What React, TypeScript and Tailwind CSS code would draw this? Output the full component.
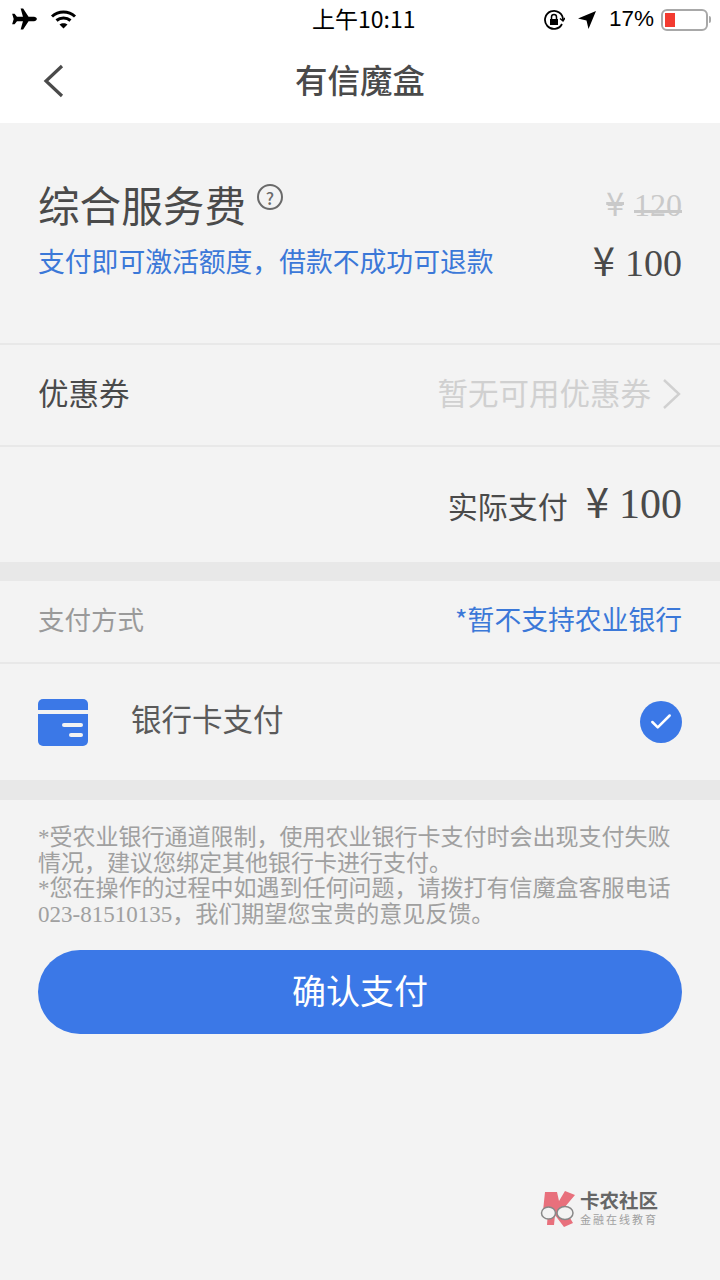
import { Check } from 'lucide-react';

const cjk = "font-['Noto_Sans_CJK_SC','Noto_Sans',sans-serif]";
const serif = "font-['Liberation_Serif','Noto_Sans_CJK_SC',serif]";

function StatusBar() {
  return (
    <div className="relative flex h-10 items-center justify-between pl-[11px] pr-[9px] text-black">
      <div className="-mt-[2px] flex items-center gap-[12px]">
        <svg width="27" height="24" viewBox="0 0 28 24" fill="currentColor">
          <path d="M10 1h2.600l5.600 8.700h5.600c1.600 0 3 1 3 2.300s-1.400 2.300-3 2.300h-5.600L12.600 23H10l2.400-8.700H6.200L3.700 17.500H1.200L2.800 12 1.200 6.500h2.500l2.500 3.200h6.200z" />
        </svg>
        <svg width="27" height="20" viewBox="0 0 27 20" fill="none" stroke="currentColor" strokeWidth="3">
          <path d="M2 7.500c6.500-6 16.500-6 23 0" />
          <path d="M6.500 11.500c4-3.500 10-3.500 14 0" />
          <path d="M13.500 19.500l-4-4c2.300-1.800 5.700-1.800 8 0z" fill="currentColor" stroke="none" />
        </svg>
      </div>
      <div className={`absolute left-[312px] top-[1px] text-[23px] leading-[34px] ${cjk}`}>上午10:11</div>
      <div className="-mt-[1px] flex items-center">
        <svg width="22" height="22" viewBox="0 0 22 22" fill="none" stroke="currentColor" strokeWidth="1.800" className="mr-[12px]">
          <path d="M19 15a9 9 0 1 1 1-4" />
          <path d="M17 9.500l3 2.500 2-3" strokeWidth="1.500" />
          <rect x="7" y="10" width="8" height="6" fill="currentColor" stroke="none" />
          <path d="M8.500 10V8a2.500 2.500 0 0 1 5 0v2" strokeWidth="1.500" />
        </svg>
        <svg width="20" height="20" viewBox="0 0 20 20" fill="currentColor" className="mr-[12px]">
          <path d="M19 1L11.500 19 9.500 10.500 1 8.500z" />
        </svg>
        <span className="mr-[7px] font-['Liberation_Sans',sans-serif] text-[22.500px] font-light leading-none">17%</span>
        <div className="flex h-[22px] w-[47px] items-center rounded-[6px] border-2 border-[#a8a8a8] p-[2px]">
          <div className="h-full w-[10px] bg-[#f33a30]" />
        </div>
        <div className="ml-[1px] h-[7px] w-[2px] rounded-r bg-[#a8a8a8]" />
      </div>
    </div>
  );
}

function NavBar() {
  return (
    <div className="relative flex h-[83px] items-center justify-center bg-white">
      <svg width="24" height="34" viewBox="0 0 24 34" fill="none" stroke="#4a4a4a" strokeWidth="3.200" className="absolute left-[42px] top-[24px]">
        <path d="M20 2L4 17l16 15" />
      </svg>
      <h1 className={`-mt-[4px] text-[32.500px] font-medium leading-none text-[#4a4a4a] ${cjk}`}>有信魔盒</h1>
    </div>
  );
}

function Price({ amount, yenSize }: { amount: string; yenSize: string }) {
  return (
    <>
      <span className={`${yenSize} ${cjk}`}>¥</span>
      <span className={`pl-[10px] ${serif}`}>{amount}</span>
    </>
  );
}

function CardIcon() {
  return (
    <svg width="50" height="47" viewBox="0 0 50 47" className="shrink-0">
      <rect width="50" height="47" rx="5" fill="#3b78e7" />
      <rect y="11" width="50" height="4" fill="#f3f3f3" />
      <rect x="24" y="24" width="21" height="4" rx="2" fill="#f3f3f3" />
      <rect x="31" y="34" width="14" height="4" rx="2" fill="#f3f3f3" />
    </svg>
  );
}

function Logo() {
  return (
    <div className="mr-[62px] flex items-center justify-end">
      <svg width="37" height="38" viewBox="0 0 37 38" className="mr-[3px]">
        <path d="M5 2h12l2 9 6-10 10 4-11 13 9 15-9 4-9-12-1 10H7l1-14H3z" fill="#e8707c" />
        <ellipse cx="8.500" cy="23" rx="7" ry="6" fill="#f3f3f3" stroke="#888888" strokeWidth="1.500" />
        <ellipse cx="25" cy="23" rx="8" ry="6.500" fill="#f3f3f3" stroke="#888888" strokeWidth="1.500" />
      </svg>
      <div className="flex flex-col font-['Liberation_Sans','Noto_Sans_CJK_SC',sans-serif]">
        <span className="text-[19.500px] font-bold leading-[22px] text-[#666666]">卡农社区</span>
        <span className="mt-[2px] text-[11px] leading-[13px] tracking-[2px] text-[#a0a0a0]">金融在线教育</span>
      </div>
    </div>
  );
}

export default function App() {
  return (
    <div lang="zh-CN" className={`flex min-h-[1280px] w-[720px] flex-col bg-[#f3f3f3] ${cjk}`}>
      <div className="bg-white">
        <StatusBar />
        <NavBar />
      </div>

      {/* Fee */}
      <section className="flex h-[222px] items-start justify-between border-b-2 border-[#e8e8e8] px-[38px] pt-[50px]">
        <div>
          <div className="flex items-start">
            <span className="text-[41.600px] leading-[62px] text-[#4a4a4a]">综合服务费</span>
            <span className="ml-[11px] mt-[11px] flex h-[26px] w-[26px] items-center justify-center rounded-full border-2 border-[#6a6a6a] text-[17px] font-medium leading-none text-[#6a6a6a]">?</span>
          </div>
          <p className="mt-[6px] text-[26.800px] leading-[40px] text-[#3b78d8]">支付即可激活额度，借款不成功可退款</p>
        </div>
        <div className="flex flex-col items-end">
          <span className="mt-[9px] text-[32px] leading-[40px] text-[#c9c9c9] line-through">
            <Price amount="120" yenSize="text-[32px]" />
          </span>
          <span className="mt-[9px] text-[38px] leading-[50px] text-[#4a4a4a]">
            <Price amount="100" yenSize="text-[40px]" />
          </span>
        </div>
      </section>

      {/* Coupon */}
      <section className="flex h-[102px] items-center justify-between border-b-2 border-[#e8e8e8] px-[38px]">
        <span className="-mt-[5px] text-[30.500px] text-[#4a4a4a]">优惠券</span>
        <div className="flex items-center">
          <span className="-mt-[5px] text-[30.500px] text-[#d0d0d0]">暂无可用优惠券</span>
          <svg width="20" height="32" viewBox="0 0 20 32" fill="none" stroke="#d0d0d0" strokeWidth="2.400" className="ml-[11px] -mt-[3px]">
            <path d="M2 2l15 14L2 30" />
          </svg>
        </div>
      </section>

      {/* Actual amount */}
      <section className="flex h-[115px] items-center justify-end gap-[18px] pr-[38px]">
        <span className="mt-[1px] text-[30px] text-[#4a4a4a]">实际支付</span>
        <span className="-mt-[6px] text-[42px] leading-none text-[#4a4a4a]">
          <Price amount="100" yenSize="text-[42px]" />
        </span>
      </section>

      <div className="h-[19px] bg-[#e8e8e8]" />

      {/* Payment method */}
      <section className="flex h-[83px] items-center justify-between border-b-2 border-[#e8e8e8] px-[38px]">
        <span className="-mt-[5px] text-[26.500px] text-[#9a9a9a]">支付方式</span>
        <span className="-mt-[4px] text-[26.800px] text-[#3b78d8]">*暂不支持农业银行</span>
      </section>

      <section className="flex h-[116px] items-center px-[38px]">
        <CardIcon />
        <span className="-mt-[6px] ml-[43px] text-[30.500px] text-[#5a5a5a]">银行卡支付</span>
        <div className="ml-auto flex h-[42px] w-[42px] items-center justify-center rounded-full bg-[#3b78e7]">
          <Check className="text-white" size={26} strokeWidth={2.500} absoluteStrokeWidth />
        </div>
      </section>

      <div className="h-[20px] bg-[#e8e8e8]" />

      {/* Notes */}
      <p className={`px-[38px] pt-[25px] text-[23px] leading-[25.700px] text-[#a0a0a0] ${serif}`}>
        *受农业银行通道限制，使用农业银行卡支付时会出现支付失败情况，建议您绑定其他银行卡进行支付。
        <br />
        *您在操作的过程中如遇到任何问题，请拨打有信魔盒客服电话023-81510135，我们期望您宝贵的意见反馈。
      </p>

      <div className="px-[38px] pt-[22px]">
        <button className="flex h-[84px] w-full items-center justify-center rounded-[42px] bg-[#3b78e7] pb-[4px] text-[34px] text-white">
          确认支付
        </button>
      </div>

      <div className="mt-[156px]">
        <Logo />
      </div>
    </div>
  );
}
